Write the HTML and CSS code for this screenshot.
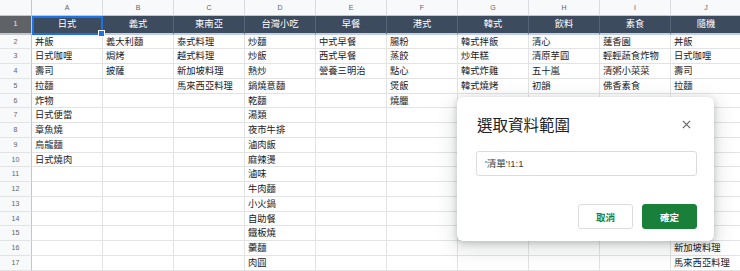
FILE: index.html
```html
<!DOCTYPE html>
<html lang="zh-Hant">
<head>
<meta charset="utf-8">
<link rel="stylesheet" href="styles.css">
</head>
<body>
<div class="sheet">
  <div class="row colhead">
    <div class="corner"></div><div>A</div><div>B</div><div>C</div><div>D</div><div>E</div><div>F</div><div>G</div><div>H</div><div>I</div><div>J</div>
  </div>
  <div class="row head">
    <div class="rn rn-sel">1</div><div class="sel">日式<span class="handle"></span></div><div>義式</div><div>東南亞</div><div>台灣小吃</div><div>早餐</div><div>港式</div><div>韓式</div><div>飲料</div><div>素食</div><div>隨機</div>
  </div>
  <div class="row"><div class="rn">2</div><div>丼飯</div><div>義大利麵</div><div>泰式料理</div><div>炒麵</div><div>中式早餐</div><div>腸粉</div><div>韓式拌飯</div><div>清心</div><div>蓮香園</div><div>丼飯</div></div>
  <div class="row"><div class="rn">3</div><div>日式咖哩</div><div>焗烤</div><div>越式料理</div><div>炒飯</div><div>西式早餐</div><div>蒸餃</div><div>炒年糕</div><div>清原芋圓</div><div>輕輕蔬食炸物</div><div>日式咖哩</div></div>
  <div class="row"><div class="rn">4</div><div>壽司</div><div>披薩</div><div>新加坡料理</div><div>熱炒</div><div>營養三明治</div><div>點心</div><div>韓式炸雞</div><div>五十嵐</div><div>清粥小菜菜</div><div>壽司</div></div>
  <div class="row"><div class="rn">5</div><div>拉麵</div><div></div><div>馬來西亞料理</div><div>鍋燒意麵</div><div></div><div>煲飯</div><div>韓式燒烤</div><div>初韻</div><div>佛香素食</div><div>拉麵</div></div>
  <div class="row"><div class="rn">6</div><div>炸物</div><div></div><div></div><div>乾麵</div><div></div><div>燒臘</div><div></div><div></div><div></div><div></div></div>
  <div class="row"><div class="rn">7</div><div>日式便當</div><div></div><div></div><div>湯類</div><div></div><div></div><div></div><div></div><div></div><div></div></div>
  <div class="row"><div class="rn">8</div><div>章魚燒</div><div></div><div></div><div>夜市牛排</div><div></div><div></div><div></div><div></div><div></div><div></div></div>
  <div class="row"><div class="rn">9</div><div>烏龍麵</div><div></div><div></div><div>滷肉飯</div><div></div><div></div><div></div><div></div><div></div><div></div></div>
  <div class="row"><div class="rn">10</div><div>日式燒肉</div><div></div><div></div><div>麻辣燙</div><div></div><div></div><div></div><div></div><div></div><div></div></div>
  <div class="row"><div class="rn">11</div><div></div><div></div><div></div><div>滷味</div><div></div><div></div><div></div><div></div><div></div><div></div></div>
  <div class="row"><div class="rn">12</div><div></div><div></div><div></div><div>牛肉麵</div><div></div><div></div><div></div><div></div><div></div><div></div></div>
  <div class="row"><div class="rn">13</div><div></div><div></div><div></div><div>小火鍋</div><div></div><div></div><div></div><div></div><div></div><div></div></div>
  <div class="row"><div class="rn">14</div><div></div><div></div><div></div><div>自助餐</div><div></div><div></div><div></div><div></div><div></div><div></div></div>
  <div class="row"><div class="rn">15</div><div></div><div></div><div></div><div>鐵板燒</div><div></div><div></div><div></div><div></div><div></div><div></div></div>
  <div class="row"><div class="rn">16</div><div></div><div></div><div></div><div>羹麵</div><div></div><div></div><div></div><div></div><div></div><div>新加坡料理</div></div>
  <div class="row"><div class="rn">17</div><div></div><div></div><div></div><div>肉圓</div><div></div><div></div><div></div><div></div><div></div><div>馬來西亞料理</div></div>
</div>

<div class="dialog">
  <div class="dlg-head">
    <div class="dlg-title">選取資料範圍</div>
    <svg class="dlg-close" width="10" height="10" viewBox="0 0 10 10"><path d="M1 1L9 9M9 1L1 9" stroke="#5f6368" stroke-width="1.3" fill="none"/></svg>
  </div>
  <div class="dlg-input">'清單'!1:1</div>
  <div class="dlg-actions">
    <button class="btn btn-cancel">取消</button>
    <button class="btn btn-ok">確定</button>
  </div>
</div>
</body>
</html>
```

FILE: styles.css
```css
html, body {
  margin: 0;
  padding: 0;
  background: #ffffff;
  overflow: hidden;
  width: 740px;
  height: 271px;
}
body {
  font-family: "Liberation Sans", "Noto Sans CJK TC", sans-serif;
  color: #202124;
  position: relative;
}
.sheet {
  display: flex;
  flex-direction: column;
  width: 760px;
}
.row {
  display: grid;
  grid-template-columns: 32px repeat(10, 71px);
  height: 14.75px;
  font-size: 9.3px;
  line-height: 14.75px;
}
.row > div {
  border-right: 1px solid #e2e3e3;
  border-bottom: 1px solid #e2e3e3;
  padding-left: 3px;
  white-space: nowrap;
  overflow: hidden;
  box-sizing: border-box;
}
.row > .rn {
  background: #f8f9fa;
  color: #5f6368;
  font-size: 7px;
  text-align: center;
  padding: 0;
  border-right: 1px solid #c4c7c5;
  border-bottom: 1px solid #e2e3e3;
}
.colhead {
  height: 16px;
  line-height: 16px;
}
.colhead > div {
  background: #f8f9fa;
  color: #5f6368;
  font-size: 7px;
  text-align: center;
  padding: 0;
  border-right: 1px solid #dadce0;
  border-bottom: 1px solid #c4c7c5;
}
.colhead > .corner {
  border-right: 1px solid #c4c7c5;
}
.head {
  height: 18.5px;
  line-height: 16px;
}
.head > div {
  background: #3d4b5f;
  color: #ffffff;
  text-align: center;
  padding: 0;
  border-right: 1px solid #56647a;
  border-bottom: 2.5px solid #c2cfe4;
}
.head > .rn-sel {
  background: #5f6368;
  color: #e8eaed;
  border-bottom: 2.5px solid #c4c7c5;
}
.head > .sel {
  position: relative;
  overflow: visible;
  outline: 2px solid #1a73e8;
  outline-offset: -2px;
}
.handle {
  position: absolute;
  right: -3px;
  bottom: -4px;
  width: 5px;
  height: 5px;
  background: #1a73e8;
  border: 1px solid #ffffff;
  z-index: 2;
}

.dialog {
  position: absolute;
  left: 457px;
  top: 97px;
  width: 257px;
  height: 144px;
  background: #ffffff;
  border-radius: 6px;
  box-shadow: 0 2px 6px rgba(60,64,67,0.25), 0 6px 18px 4px rgba(60,64,67,0.14);
  box-sizing: border-box;
  padding: 16px 17px 0 20px;
  display: flex;
  flex-direction: column;
  font-family: "Liberation Sans", "Noto Sans CJK TC", sans-serif;
}
.dlg-head {
  display: flex;
  align-items: center;
  justify-content: space-between;
  height: 22px;
  padding-right: 6px;
}
.dlg-title {
  font-size: 15.5px;
  color: #202124;
}
.dlg-close {
  display: block;
  width: 9px;
  height: 9px;
}
.dlg-input {
  margin-top: 16px;
  margin-left: -1px;
  height: 25px;
  border: 1px solid #dadce0;
  border-radius: 3px;
  box-sizing: border-box;
  font-size: 9.5px;
  color: #3c4043;
  line-height: 23px;
  padding-left: 8px;
}
.dlg-actions {
  margin-top: 28px;
  display: flex;
  justify-content: flex-end;
  gap: 9px;
}
.btn {
  width: 55px;
  height: 25px;
  border-radius: 3px;
  font-family: "Liberation Sans", "Noto Sans CJK TC", sans-serif;
  font-size: 9.5px;
  font-weight: bold;
  box-sizing: border-box;
  padding: 0;
}
.btn-cancel {
  background: #ffffff;
  color: #188038;
  border: 1px solid #dadce0;
}
.btn-ok {
  background: #188038;
  color: #ffffff;
  border: 1px solid #188038;
}
```
